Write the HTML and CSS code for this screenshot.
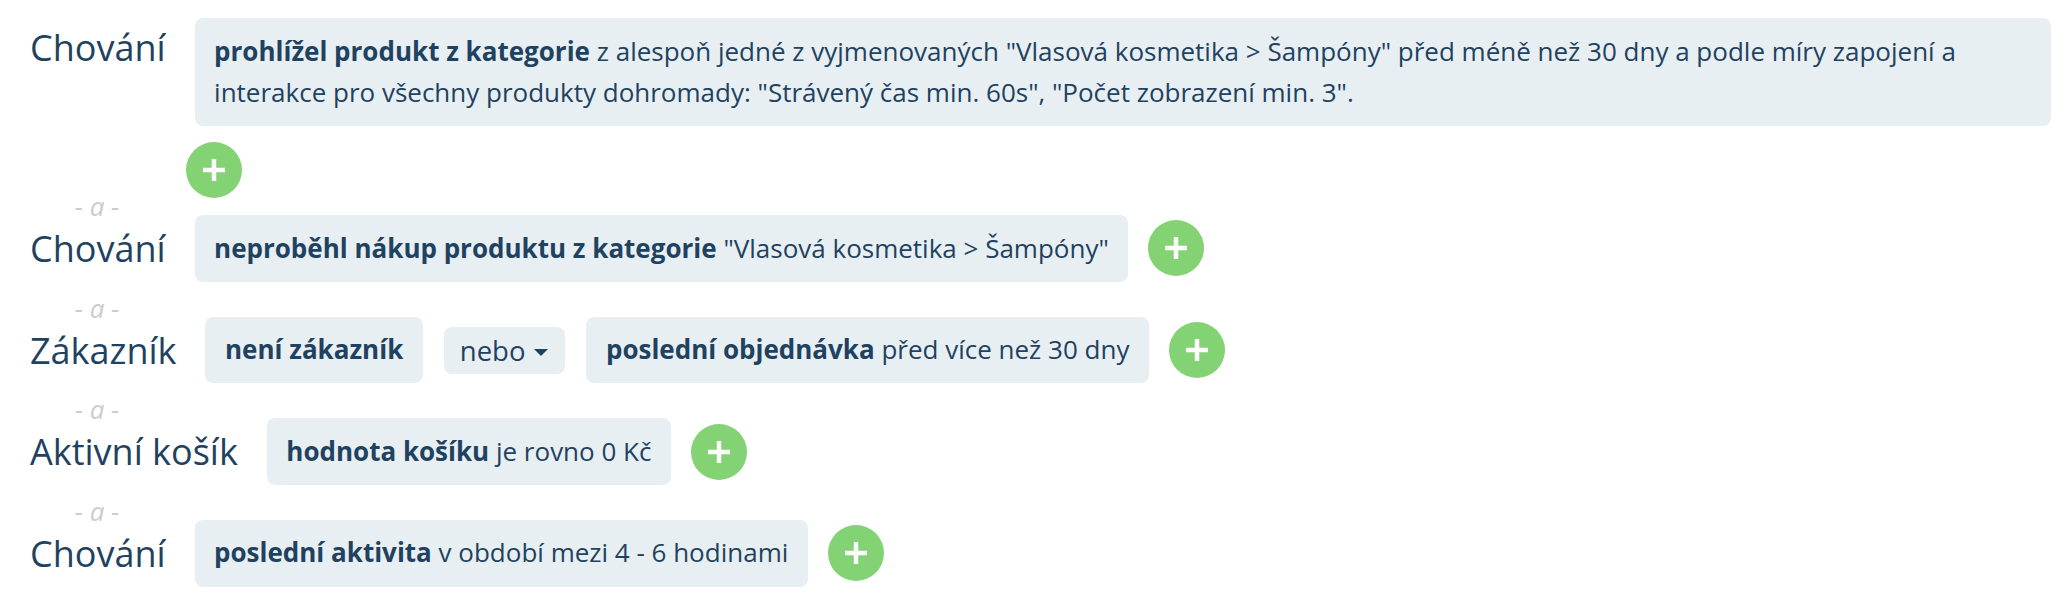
FILE: index.html
```html
<!DOCTYPE html>
<html lang="cs">
<head>
  <meta charset="UTF-8" />
  <title>Segment – podmínky</title>
  <link rel="stylesheet" href="styles.css">
</head>
<body>
  <div class="conditions">

    <div class="row row-top">
      <span class="label">Chování</span>
      <div class="cond cond-wide">
        <strong>prohlížel produkt z kategorie</strong> z alespoň jedné z vyjmenovaných "Vlasová kosmetika &gt; Šampóny" před méně než 30 dny a podle míry zapojení a interakce pro všechny produkty dohromady: "Strávený čas min. 60s", "Počet zobrazení min. 3".
      </div>
    </div>
    <div class="add-line">
      <button class="add" title="Přidat"><svg viewBox="0 0 56 56"><path d="M28 17v22M17 28h22"/></svg></button>
    </div>

    <div class="sep">- a -</div>
    <div class="row">
      <span class="label">Chování</span>
      <div class="cond"><strong>neproběhl nákup produktu z kategorie</strong> "Vlasová kosmetika &gt; Šampóny"</div>
      <button class="add" title="Přidat"><svg viewBox="0 0 56 56"><path d="M28 17v22M17 28h22"/></svg></button>
    </div>

    <div class="sep">- a -</div>
    <div class="row">
      <span class="label">Zákazník</span>
      <div class="cond"><strong>není zákazník</strong></div>
      <div class="joiner">nebo<span class="caret"></span></div>
      <div class="cond"><strong>poslední objednávka</strong> před více než 30 dny</div>
      <button class="add" title="Přidat"><svg viewBox="0 0 56 56"><path d="M28 17v22M17 28h22"/></svg></button>
    </div>

    <div class="sep">- a -</div>
    <div class="row">
      <span class="label">Aktivní košík</span>
      <div class="cond"><strong>hodnota košíku</strong> je rovno 0 Kč</div>
      <button class="add" title="Přidat"><svg viewBox="0 0 56 56"><path d="M28 17v22M17 28h22"/></svg></button>
    </div>

    <div class="sep">- a -</div>
    <div class="row">
      <span class="label">Chování</span>
      <div class="cond"><strong>poslední aktivita</strong> v období mezi 4 - 6 hodinami</div>
      <button class="add" title="Přidat"><svg viewBox="0 0 56 56"><path d="M28 17v22M17 28h22"/></svg></button>
    </div>

  </div>
</body>
</html>
```

FILE: styles.css
```css
body {
  margin: 0;
  padding: 18px 21px 0 30px;
  background: #fff;
  font-family: "Open Sans", "Noto Sans", sans-serif;
  color: #1f4260;
}
.row {
  display: flex;
  align-items: center;
  gap: 21px;
}
.row-top {
  align-items: baseline;
}
.label {
  font-size: 36px;
  font-weight: 400;
  margin-right: 8px;
  white-space: nowrap;
}
.cond {
  background: #e8eff3;
  border-radius: 8px;
  padding: 12.5px 19.5px;
  font-size: 26px;
  line-height: 1.6;
}
.cond-wide {
  flex: 1;
}
.cond strong {
  font-weight: 700;
}
.joiner {
  background: #e8eff3;
  border-radius: 8px;
  height: 47px;
  line-height: 47px;
  padding: 0 17px 0 16px;
  font-size: 27.5px;
  display: flex;
  align-items: center;
}
.caret {
  width: 0;
  height: 0;
  margin-left: 9px;
  margin-top: 4px;
  border-left: 7px solid transparent;
  border-right: 7px solid transparent;
  border-top: 7px solid #1f4260;
}
.add {
  width: 56px;
  height: 56px;
  padding: 0;
  border: none;
  border-radius: 50%;
  background: #83d274;
  cursor: pointer;
  flex: none;
  margin-left: -1px;
}
.add svg {
  display: block;
  width: 56px;
  height: 56px;
}
.add path {
  stroke: #fff;
  stroke-width: 4.5;
  fill: none;
}
.add-line {
  padding-left: 157px;
  margin-top: 16px;
}
.sep {
  width: 134px;
  text-align: center;
  font-size: 26px;
  line-height: 24px;
  font-style: italic;
  font-weight: 400;
  color: #cccccc;
  margin: 14px 0 -3px;
}
.add-line + .sep {
  margin-top: -9px;
  margin-bottom: -3px;
}
```
